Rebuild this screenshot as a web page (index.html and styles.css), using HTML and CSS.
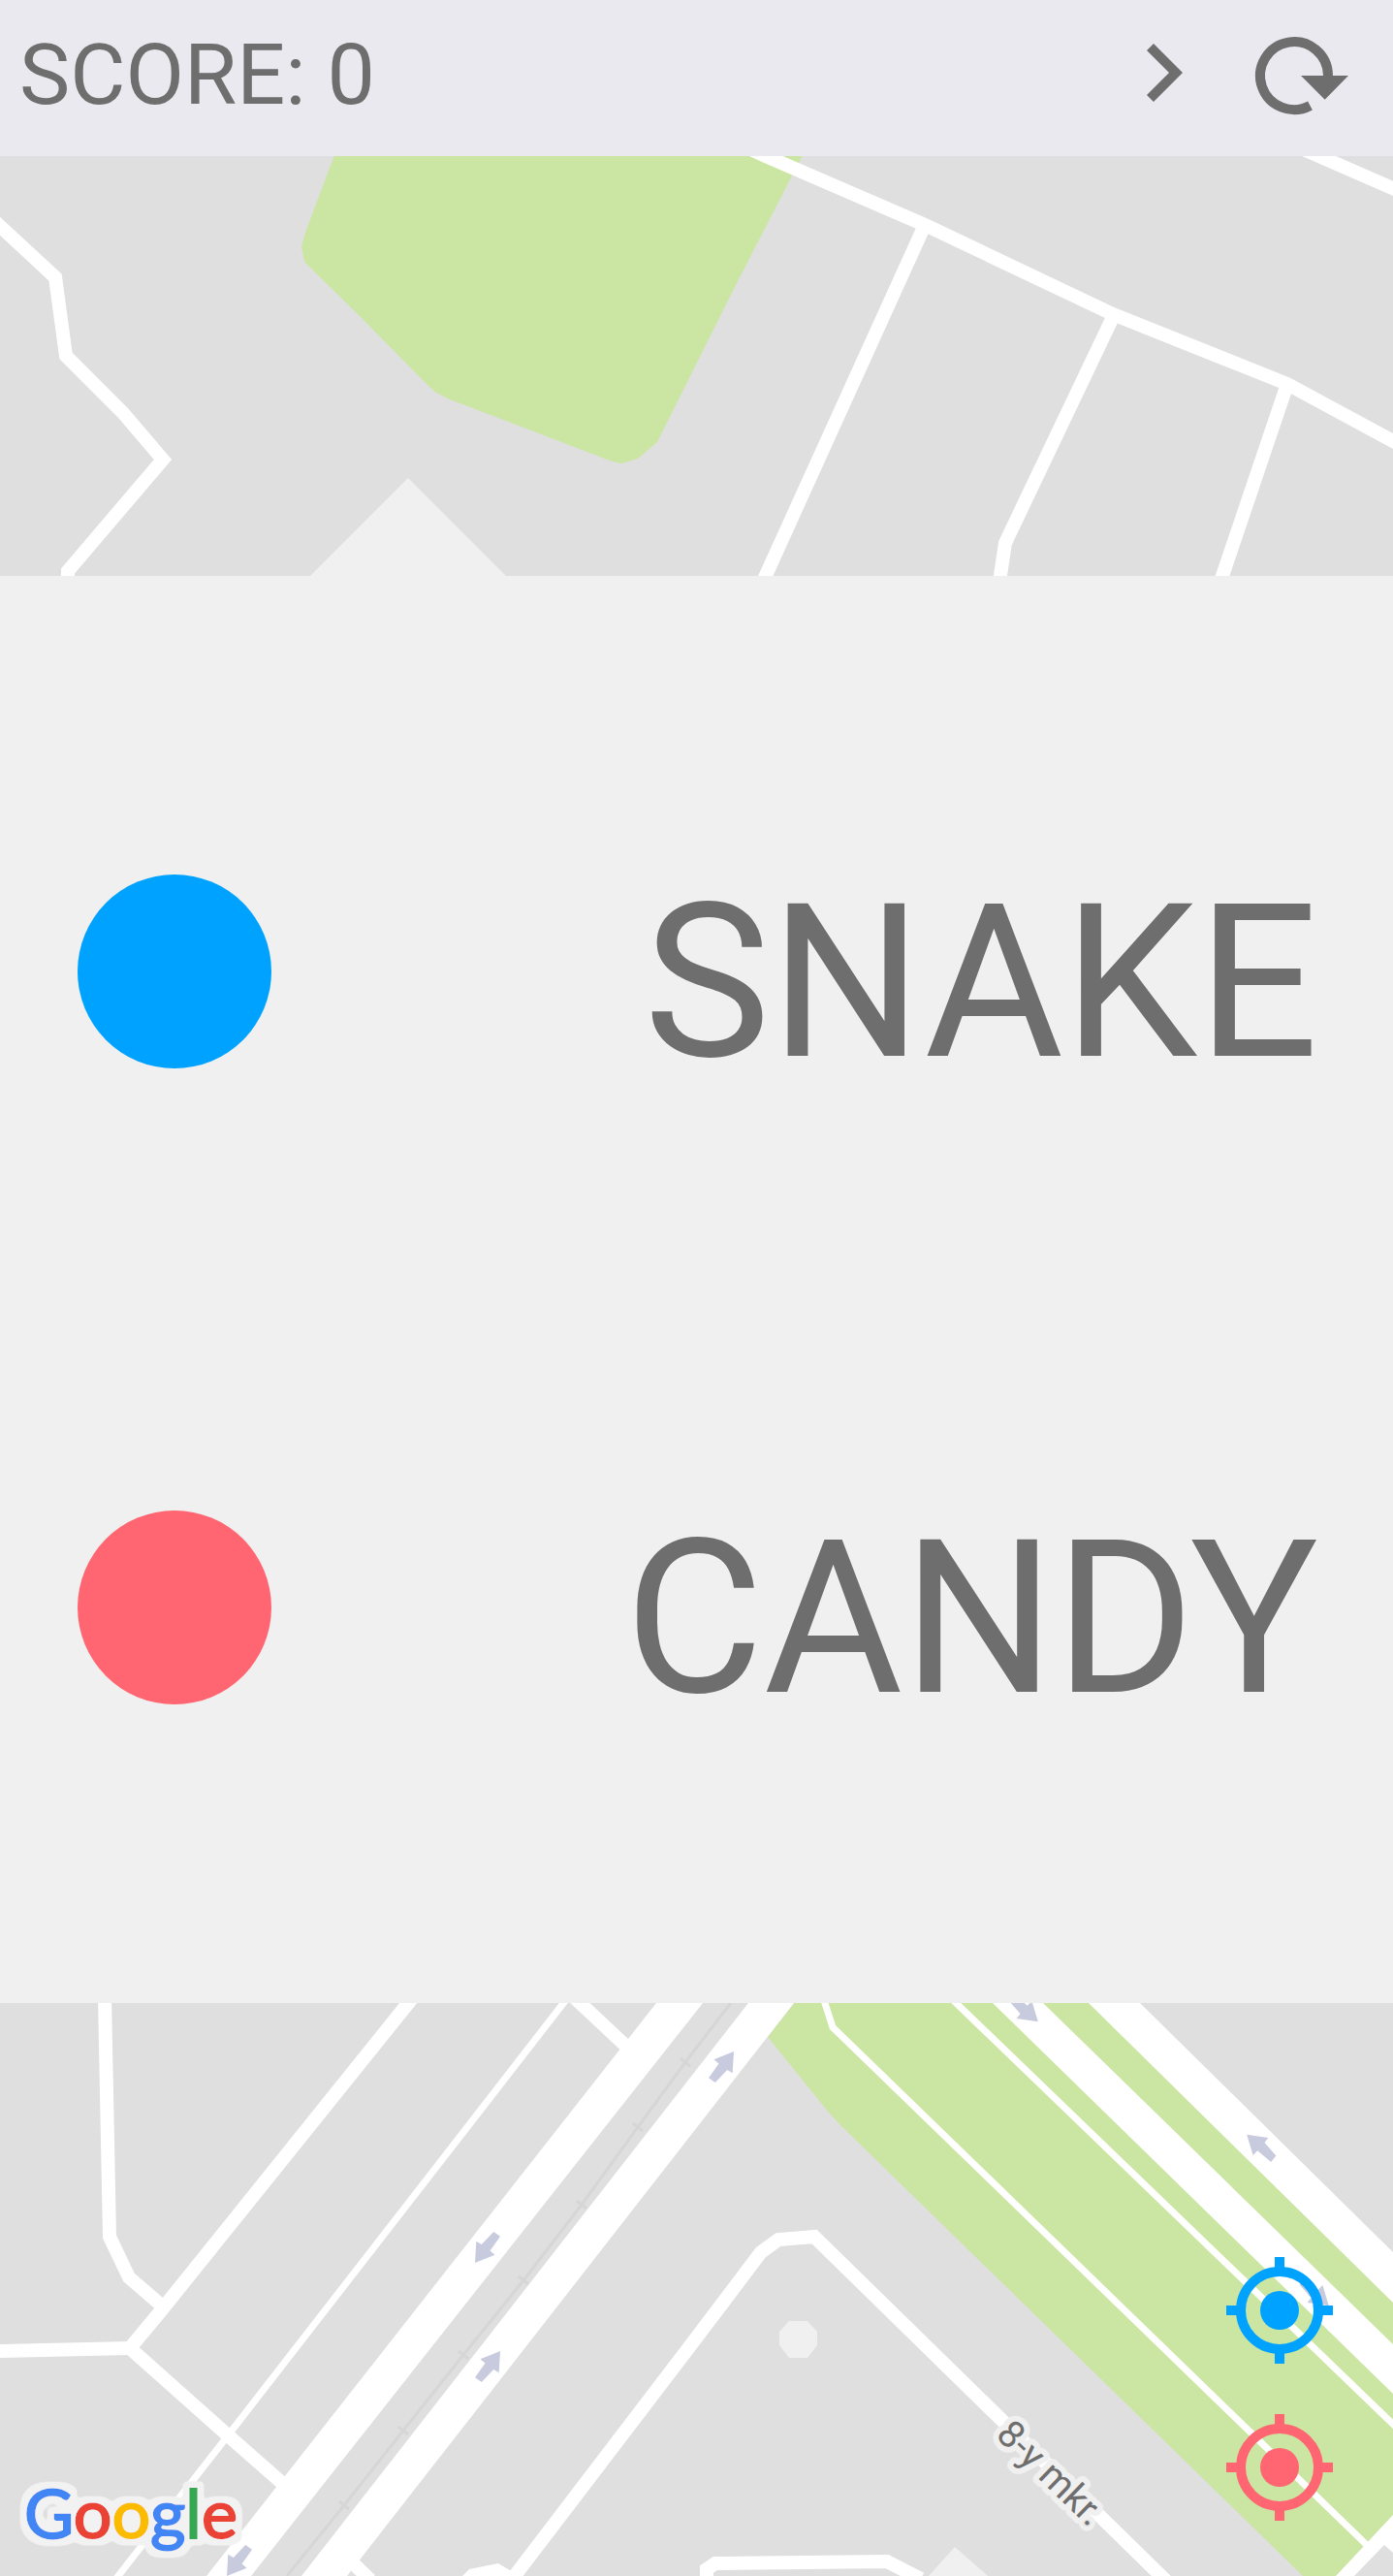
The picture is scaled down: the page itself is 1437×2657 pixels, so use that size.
FILE: index.html
```html
<!DOCTYPE html>
<html lang="en">
<head>
<meta charset="utf-8">
<meta name="viewport" content="width=device-width, initial-scale=1">
<title>Snake</title>
<link rel="stylesheet" href="styles.css">
</head>
<body>
<header class="bar">
  <h1 class="score">SCORE: 0</h1>
  <div class="actions">
    <button class="icon-button" type="button" aria-label="Next">
      <svg class="icon" viewBox="0 0 24 24"><path d="M10 6 8.600 7.400 13.200 12l-4.600 4.600L10 18l6-6z"/></svg>
    </button>
    <button class="icon-button" type="button" aria-label="Restart">
      <svg class="icon" viewBox="0 0 120 120">
        <path class="ring" d="M95 63A35 35 0 1 0 76.500 94"/>
        <path d="M67 63h49L91.700 87.700z"/>
      </svg>
    </button>
  </div>
</header>
<main class="stage">
  <svg class="map" viewBox="0 161 1437 2496" preserveAspectRatio="xMidYMid slice" role="img" aria-label="Map">
    <defs>
      <path id="arrow" d="M-13 16-11.700-6.300-6.200-3 6.200-16 13-11.300 2.500 3.600 7.600 7.800z"/>
      <filter id="halo" x="-10%" y="-20%" width="120%" height="140%">
        <feMorphology in="SourceAlpha" operator="dilate" radius="6" result="grown"/>
        <feGaussianBlur in="grown" stdDeviation="2" result="soft"/>
        <feComponentTransfer in="soft" result="edge"><feFuncA type="linear" slope="4" intercept="-1"/></feComponentTransfer>
        <feFlood flood-color="#f2f2f2"/>
        <feComposite in2="edge" operator="in" result="glow"/>
        <feMerge><feMergeNode in="glow"/><feMergeNode in="SourceGraphic"/></feMerge>
      </filter>
    </defs>
    <g class="park">
      <path d="M345 160 316 237l-5 17 3 16 56 55 72 73 8 7 14 7 165 63 12 3 17-5 20-17 80-160 70-136z"/>
      <path d="M792 2101 820 2065H1150L1437 2350V2594L1380 2657H1344L866 2191 855 2179z"/>
    </g>
    <g class="block">
      <path d="M814 2394h19l10 11v14l-10 13h-19l-10-13v-14z"/>
      <path d="M985 2627 958 2657h61z"/>
    </g>
    <g class="road">
      <path d="M-10 224 57 286 68 367 127 426 168 474 70 589V600"/>
      <path d="M770 152 790 161 954 232 1148 324 1328 396 1450 462"/>
      <path d="M954 232 787 600"/>
      <path d="M1149 325 1037 560 1031 600"/>
      <path d="M1328 396 1259 600"/>
      <path d="M1340 152 1450 200"/>
      <path d="M108 2060 113 2307 133 2349 169 2380"/>
      <path d="M426 2060 168 2381 134 2422 234 2511 300 2569"/>
      <path d="M-5 2425 134 2422"/>
      <path d="M592 2060 655 2119"/>
      <path d="M355 2635 382 2661"/>
      <path d="M527 2662 717 2413 785 2323 803 2310 840 2307 1204 2663"/>
      <path d="M729 2660V2650L738 2644 915 2642 950 2660"/>
    </g>
    <g class="path">
      <path d="M586 2060 236 2511 118 2662"/>
      <path d="M980 2060 1445 2508"/>
      <path d="M849 2060 859 2091 1412 2627"/>
    </g>
    <g class="avenue">
      <path d="M677 2066h48L259 2657h-46z"/>
      <path d="M772 2066h47L358 2657h-47z"/>
      <path d="M1024 2066h52L1437 2418v51z"/>
      <path d="M1123 2066h53L1437 2323v52z"/>
      <path d="M1437 2594 1378 2657h19L1428 2625 1437 2633z"/>
      <path d="M477 2657 484 2650 514 2644 526 2651 540 2657z"/>
    </g>
    <g class="rail">
      <path d="M754 2066 707 2127 658 2194 600 2274 540 2352 478 2429 416 2507 355 2584 296 2657"/>
      <path d="M702 2123l10 8M653 2190l10 8M595 2270l10 8M535 2348l10 8M473 2425l10 8M411 2503l10 8M350 2580l10 8"/>
    </g>
    <g class="oneway">
      <use href="#arrow" transform="translate(503 2318)"/>
      <use href="#arrow" transform="translate(247 2641)"/>
      <use href="#arrow" transform="translate(503 2441) rotate(180)"/>
      <use href="#arrow" transform="translate(744 2132) rotate(180)"/>
      <use href="#arrow" transform="translate(1301 2216) rotate(95)"/>
      <use href="#arrow" transform="translate(1056 2071) rotate(-85)"/>
      <use href="#arrow" transform="translate(1356 2364) rotate(-85)"/>
    </g>
    <text class="street" transform="translate(1026 2513) rotate(44)">8-y mkr.</text>
    <text class="brand" x="25" y="2618" filter="url(#halo)"><tspan class="g-blue">G</tspan><tspan class="g-red">o</tspan><tspan class="g-yellow">o</tspan><tspan class="g-blue">g</tspan><tspan class="g-green">l</tspan><tspan class="g-red">e</tspan></text>
  </svg>
  <section class="legend" aria-label="Legend">
    <ul class="legend-list">
      <li class="legend-row"><span class="dot snake"></span><span class="legend-name">SNAKE</span></li>
      <li class="legend-row"><span class="dot candy"></span><span class="legend-name">CANDY</span></li>
    </ul>
  </section>
  <div class="locate">
    <button class="icon-button locate-snake" type="button" aria-label="Locate snake">
      <svg class="icon" viewBox="0 0 120 120"><circle class="ring" cx="60" cy="60" r="40"/><circle cx="60" cy="60" r="20"/><path d="M55 5h10v12H55zM55 103h10v12H55zM5 55h12v10H5zM103 55h12v10h-12z"/></svg>
    </button>
    <button class="icon-button locate-candy" type="button" aria-label="Locate candy">
      <svg class="icon" viewBox="0 0 120 120"><circle class="ring" cx="60" cy="60" r="40"/><circle cx="60" cy="60" r="20"/><path d="M55 5h10v12H55zM55 103h10v12H55zM5 55h12v10H5zM103 55h12v10h-12z"/></svg>
    </button>
  </div>
</main>
</body>
</html>
```
FILE: styles.css
```css
* {
  box-sizing: border-box;
}

body {
  margin: 0;
  min-height: 100vh;
  display: flex;
  flex-direction: column;
  font-family: Roboto, "Liberation Sans", sans-serif;
  color: #6e6e6e;
  background: #dfdfdf;
}

.bar {
  display: flex;
  justify-content: space-between;
  align-items: flex-start;
  min-height: 161px;
  padding: 0 42px 0 20px;
  background: #e9e9ef;
}

.score {
  margin: 0;
  font-size: 88px;
  font-weight: 400;
  line-height: 154px;
}

.actions {
  display: flex;
  gap: 15px;
  padding-top: 15px;
}

.icon-button {
  display: block;
  width: 120px;
  height: 120px;
  padding: 0;
  border: 0;
  background: none;
  color: inherit;
  cursor: pointer;
}

.icon {
  display: block;
  width: 100%;
  height: 100%;
  fill: currentColor;
}

.ring {
  fill: none;
  stroke: currentColor;
  stroke-width: 10;
}

.stage {
  position: relative;
  flex: 1;
  padding: 433px 0 591px;
}

.map {
  position: absolute;
  inset: 0;
  width: 100%;
  height: 100%;
}

.park {
  fill: #cbe6a3;
}

.block {
  fill: #f0f0f0;
}

.road,
.path,
.rail {
  fill: none;
  stroke: #fff;
  stroke-width: 14;
}

.path {
  stroke-width: 7;
}

.rail {
  stroke: #d6d6d6;
  stroke-width: 3;
}

.avenue {
  fill: #fff;
}

.oneway {
  fill: #c8cbde;
}

.street {
  font-size: 39px;
  fill: #6e6e6e;
  paint-order: stroke;
  stroke: #f0f0f0;
  stroke-width: 12;
  stroke-linejoin: round;
}

.brand {
  font-family: Lato, sans-serif;
  font-size: 70px;
  stroke-width: 2;
}

.g-blue {
  fill: #4285f4;
  stroke: #4285f4;
}

.g-red {
  fill: #ea4335;
  stroke: #ea4335;
}

.g-yellow {
  fill: #fbbc05;
  stroke: #fbbc05;
}

.g-green {
  fill: #34a853;
  stroke: #34a853;
}

.legend {
  position: relative;
  padding: 308px 77px 284px 80px;
  background: #f0f0f0;
}

.legend::before {
  content: "";
  position: absolute;
  bottom: 100%;
  left: 320px;
  width: 202px;
  height: 101px;
  background: inherit;
  clip-path: polygon(50% 0, 100% 100%, 0 100%);
}

.legend-list {
  display: flex;
  flex-direction: column;
  gap: 432px;
  margin: 0;
  padding: 0;
  list-style: none;
}

.legend-row {
  display: flex;
  justify-content: space-between;
  align-items: flex-start;
}

.dot {
  width: 200px;
  height: 200px;
  border-radius: 50%;
}

.snake {
  background: #00a2ff;
}

.candy {
  background: #ff6672;
}

.legend-name {
  font-size: 220px;
  line-height: 224px;
}

.locate {
  position: absolute;
  right: 57px;
  bottom: 52px;
  display: flex;
  flex-direction: column;
  gap: 42px;
}

.locate-snake {
  color: #00a2ff;
}

.locate-candy {
  color: #ff6672;
}
```
